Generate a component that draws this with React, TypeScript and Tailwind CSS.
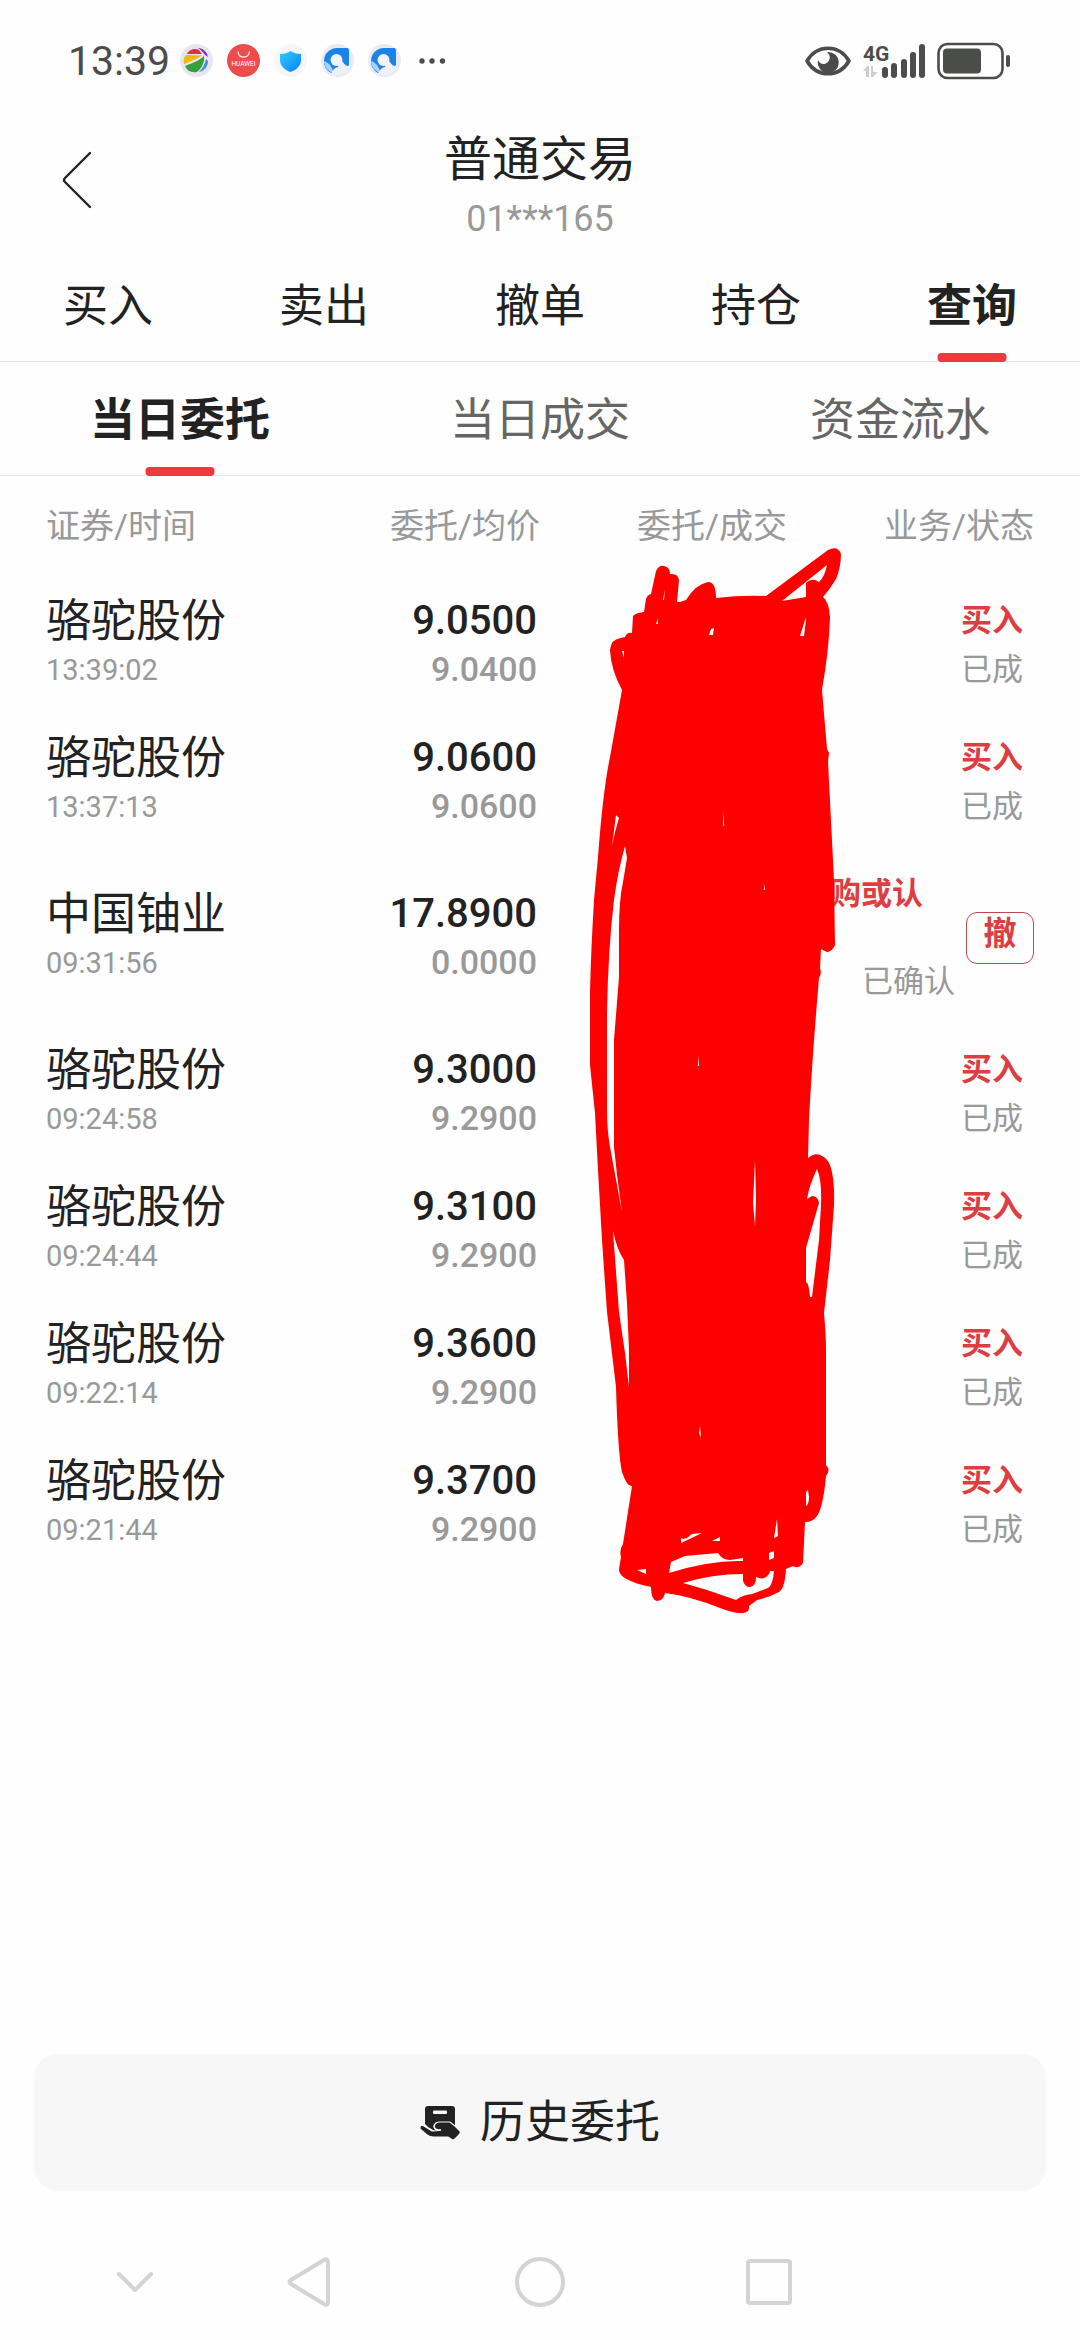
import clsx from 'clsx';

type Order = {
  name: string;
  time: string;
  price: string;
  avg: string;
  side: string;
  status: string;
  cancelable?: boolean;
};

const mainTabs = ['买入', '卖出', '撤单', '持仓', '查询'];
const subTabs = ['当日委托', '当日成交', '资金流水'];
const columns = ['证券/时间', '委托/均价', '委托/成交', '业务/状态'];

const orders: Order[] = [
  { name: '骆驼股份', time: '13:39:02', price: '9.0500', avg: '9.0400', side: '买入', status: '已成' },
  { name: '骆驼股份', time: '13:37:13', price: '9.0600', avg: '9.0600', side: '买入', status: '已成' },
  { name: '中国铀业', time: '09:31:56', price: '17.8900', avg: '0.0000', side: '购或认', status: '已确认', cancelable: true },
  { name: '骆驼股份', time: '09:24:58', price: '9.3000', avg: '9.2900', side: '买入', status: '已成' },
  { name: '骆驼股份', time: '09:24:44', price: '9.3100', avg: '9.2900', side: '买入', status: '已成' },
  { name: '骆驼股份', time: '09:22:14', price: '9.3600', avg: '9.2900', side: '买入', status: '已成' },
  { name: '骆驼股份', time: '09:21:44', price: '9.3700', avg: '9.2900', side: '买入', status: '已成' },
];

function GalleryIcon() {
  return (
    <svg viewBox="0 0 33 33" className="size-[33px]">
      <circle cx="16.5" cy="16.5" r="16.5" fill="#e8e6f2" />
      <path d="M7 10C9 5 16 4 19 6L22 10Z" fill="#d8333f" />
      <path d="M18 4C23 4 27 8 28 13L25 11C23 8 21 6 18 4Z" fill="#9424b8" />
      <path d="M4 20C3 16 4 13 6 11L22 11.500C17 15 10 18 4 20Z" fill="#f2b80c" />
      <path d="M5 22C13 19 20 16 24 12C25 19 21 25 17 28C11 29 7 27 5 22Z" fill="#35a13c" />
      <path d="M26 15L28 17C28 23 24 27 19 28C23 24 25 20 26 15Z" fill="#4190dc" />
    </svg>
  );
}

function HuaweiIcon() {
  return (
    <svg viewBox="0 0 33 33" className="size-[33px]">
      <circle cx="16.5" cy="16.5" r="16.5" fill="#ee4c4c" />
      <path d="M11 7.500C11.500 15 21.500 15 22.500 7.500" fill="none" stroke="#fff" strokeWidth="1.2" />
      <text x="16.500" y="22" textAnchor="middle" fontSize="6.500" fill="#fff" fontFamily="Roboto, sans-serif">
        HUAWEI
      </text>
    </svg>
  );
}

function ShieldIcon() {
  return (
    <svg viewBox="0 0 33 33" className="size-[33px]">
      <defs>
        <linearGradient id="shield" x1="0" y1="0" x2="1" y2="1">
          <stop offset="0" stopColor="#2fd0fb" />
          <stop offset="1" stopColor="#0a7ff8" />
        </linearGradient>
      </defs>
      <circle cx="16.5" cy="16.5" r="16.5" fill="#f5f6f7" />
      <path d="M16.500 7C19 9 23 10 27 10V16C27 22 22 26 16.500 28C11 26 6 22 6 16V10C10 10 14 9 16.500 7Z" fill="url(#shield)" />
    </svg>
  );
}

function BrowserIcon() {
  return (
    <svg viewBox="0 0 33 33" className="size-[33px]">
      <circle cx="16.5" cy="16.5" r="16.5" fill="#e6ebf5" />
      <path d="M3 17A13 13 0 0 1 16 4H26Q28 4 28 7V21L20 27L10 29Q3 25 3 17Z" fill="#1a83e8" />
      <path d="M3 17Q9 18 13 29Q4 27 3 17Z" fill="#a9d3f8" />
      <circle cx="15.500" cy="16" r="6" fill="#f1f3fa" />
      <path d="M10 30Q12 24 17 23Q17 17 22 18Q24 22 29 23Q26 30 18 31Q13 31 10 30Z" fill="#eef1f9" />
    </svg>
  );
}

function StatusBar() {
  return (
    <div className="flex h-[121px] items-center justify-between pl-[68px] pr-[69px] text-[#4b4d4a]">
      <div className="flex items-center gap-[14px]">
        <span className="w-[98px] text-[41px] leading-[48px]">13:39</span>
        <GalleryIcon />
        <HuaweiIcon />
        <ShieldIcon />
        <BrowserIcon />
        <BrowserIcon />
        <svg viewBox="0 0 30 8" className="ml-[2px] h-2 w-[30px]" fill="currentColor">
          <circle cx="5" cy="4" r="2.7" />
          <circle cx="15" cy="4" r="2.7" />
          <circle cx="25.500" cy="4" r="2.7" />
        </svg>
      </div>
      <div className="flex items-center gap-3">
        <svg viewBox="0 0 46 32" className="h-8 w-[46px]">
          <path d="M2 16C12 -1 34 -1 44 16C34 33 12 33 2 16Z" fill="none" stroke="currentColor" strokeWidth="3.600" strokeLinejoin="round" />
          <path d="M22 7A10.500 10.500 0 1 1 13 15C15 20 20 20 23 17C26 13 25 10 22 7Z" fill="currentColor" />
        </svg>
        <svg viewBox="0 0 62 36" className="h-9 w-[62px]" fill="currentColor">
          <text x="0" y="18" fontSize="21" fontWeight="700" fontFamily="Roboto, sans-serif">
            4G
          </text>
          <path d="M0 28L4 23H6V34H3V28ZM8 23H10V29H15L10 34H8Z" fill="#cfcccf" />
          <rect x="19" y="24" width="6" height="11" rx="3" />
          <rect x="28" y="20" width="6" height="15" rx="3" />
          <rect x="38" y="16" width="6" height="19" rx="3" />
          <rect x="47" y="9" width="6" height="26" rx="3" />
          <rect x="56" y="1" width="6" height="34" rx="3" />
        </svg>
        <svg viewBox="0 0 74 38" className="h-[38px] w-[74px]">
          <rect x="1.500" y="2" width="64" height="34" rx="9" fill="none" stroke="currentColor" strokeWidth="2.600" />
          <rect x="6" y="6.500" width="38" height="25" rx="4" fill="currentColor" />
          <rect x="69" y="13" width="4" height="12" rx="2" fill="currentColor" />
        </svg>
      </div>
    </div>
  );
}

function Tabs({ items, active, sub }: { items: string[]; active: number; sub?: boolean }) {
  return (
    <nav className="flex border-b border-[#e6e6e6]">
      {items.map((label, i) => (
        <button
          key={label}
          className={clsx(
            'relative h-[113px] flex-1 pt-1 text-[45px] leading-[64px]',
            i === active ? 'font-bold' : sub && 'text-[#666]',
          )}
        >
          {label}
          {i === active && (
            <span className="absolute -bottom-px left-1/2 h-[9px] w-[69px] -translate-x-1/2 rounded-[4px] bg-[#ec3a3d]" />
          )}
        </button>
      ))}
    </nav>
  );
}

function OrderRow({ order }: { order: Order }) {
  return (
    <tr className={order.cancelable ? 'h-[175px]' : 'h-[137px]'}>
      <td>
        <div className="text-[45px] leading-[51px]">{order.name}</div>
        <div className="text-[29px] leading-[47px] text-[#999]">{order.time}</div>
      </td>
      <td className="pr-[3px] text-right font-medium">
        <div className="text-[40px] leading-[49px]">{order.price}</div>
        <div className="text-[34px] leading-[49px] text-[#999]">{order.avg}</div>
      </td>
      <td />
      <td>
        {order.cancelable ? (
          <div className="flex items-center justify-end gap-[11px] text-[31px] leading-[49px]">
            <div className="flex flex-col gap-[39px] whitespace-nowrap text-right">
              <span className="pr-8 font-bold text-[#dc3e42]">{order.side}</span>
              <span className="text-[#999]">{order.status}</span>
            </div>
            <button className="h-[52px] w-[68px] rounded-[11px] border border-[#c0474c] pb-2 text-[33px] font-bold leading-[42px] text-[#dc3e42]">
              撤
            </button>
          </div>
        ) : (
          <div className="pr-[11px] text-right text-[31px] leading-[49px]">
            <div className="font-bold text-[#dc3e42]">{order.side}</div>
            <div className="text-[#999]">{order.status}</div>
          </div>
        )}
      </td>
    </tr>
  );
}

// Freehand marker strokes covering the quantity column
function Scribble() {
  return (
    <svg viewBox="590 546 254 1070" className="pointer-events-none absolute left-[590px] top-[70px] h-[1070px] w-[254px]">
      <path
        fill="#ff0000"
        fillRule="evenodd"
        d="M610 650Q611 639 621 638L625 637Q627 632 632 633L633 616Q635 613 644 612L646 599Q647 595 651 594L656 571Q659 565 664 566Q670 567 670 574Q678 573 679 580L677 602H680L686 600Q696 584 708 582Q716 582 716 598Q740 595 766 596L828 550Q838 545 841 554Q841 567 836 579Q830 589 823 597Q829 602 830 617Q829 650 822 690L827 749L829 753L828 762L834 880L835 945Q832 952 827 952L821 949L820 968Q822 974 819 978Q812 1060 809 1120L808 1158Q818 1149 828 1161Q835 1173 834 1205L830 1260L824 1313Q826 1335 826 1350V1465Q831 1470 826 1476Q823 1508 817 1516Q813 1522 805 1522L803 1563Q800 1568 795 1567L793 1566L786 1569Q785 1588 779 1592Q770 1597 757 1600L749 1606Q750 1612 743 1613Q735 1614 720 1608Q690 1596 665 1593Q664 1600 657 1601Q651 1600 651 1587Q618 1580 619 1569L621 1557Q619 1550 623 1544L632 1486Q627 1487 622 1472Q618 1455 616 1387L607 1312L602 1240L598 1170L595 1113L590 1065V992Q591 950 594 900L598 857Q603 790 610 757L622 690Q611 670 610 650Z
        M827 565L782 601L806 597V583Q812 577 819 582Q825 576 827 565Z
        M806 617L800 636H804L806 620Z
        M711 629L709 635H713L714 628Z
        M622 651L624 658V651Z
        M665 589L663 600L664 600Z
        M658 618L656 624H658Z
        M616 815L619 818L615 832L612 846Z
        M625 846L627 858L623 882Q619 900 619 930V977L614 1040V1147L617 1175L622 1212L610 1147Q607 1130 607 1110V1013Q608 950 614 900Q618 870 625 846Z
        M613 1231Q617 1250 624 1260L627 1303L629 1350V1387L625 1353L619 1312Z
        M723 810L724 826H723Z
        M765 884L764 890H765Z
        M698 1055V1066H699Z
        M755 1160L753 1203L755 1226L756 1200Z
        M817 1169Q822 1180 821 1205L819 1240L812 1297H810Q809 1283 806 1282V1248L819 1203Q818 1196 812 1196L807 1199Q809 1186 817 1169Z
        M808 1490L806 1492V1506Q809 1504 809 1497Z
        M700 1426L699 1433L701 1438Z
        M681 1538V1543L702 1533L692 1534L687 1538L683 1539Z
        M712 1541H720V1537Z
        M685 1556L718 1553Q722 1560 730 1560L743 1558V1561Q710 1560 669 1573L671 1562Z
        M637 1570L646 1569V1574Z
        M683 1583Q712 1574 743 1574V1581Q745 1587 750 1587Q756 1586 756 1577Q764 1581 769 1574L770 1571H774Q773 1585 768 1588L752 1594Q742 1595 736 1600L707 1590Z
        M769 1553L774 1551V1558L769 1560Z
        M777 1519L774 1538L778 1536Z"
      />
    </svg>
  );
}

function HandCardIcon() {
  return (
    <svg viewBox="0 0 40 36" className="h-9 w-10">
      <path d="M8 1H32Q35 1 35 4V21L20 29L8 22L5 19V4Q5 1 8 1Z" fill="#222" />
      <rect x="13" y="5.500" width="14" height="3.500" rx="1" fill="#f7f7f7" />
      <path
        d="M0 22Q1 19 4 21L12 26Q17 26 21 25Q14 25 14 21Q15 17 20 17H30L35 21L40 26Q41 28 39 30L35 34Q33 36 31 34L28 32H13Q9 32 7 30L0 24Z"
        fill="#222"
        stroke="#f7f7f7"
        strokeWidth="1.200"
      />
      <path d="M21 25H16Q13 22 15 19" fill="none" stroke="#f7f7f7" strokeWidth="1.200" />
    </svg>
  );
}

function NavBar() {
  return (
    <div className="mt-8 grid h-[117px] grid-cols-[270fr_78fr_384fr_74fr_274fr] place-items-center">
      <button aria-label="收起">
        <svg viewBox="0 0 40 24" className="h-6 w-10" fill="none" stroke="#d5d3d5" strokeWidth="4" strokeLinecap="round" strokeLinejoin="round">
          <path d="M4 4L20 20L36 4" />
        </svg>
      </button>
      <button aria-label="返回">
        <svg viewBox="0 0 46 52" className="h-[52px] w-[46px]" fill="none" stroke="#d5d3d5" strokeWidth="4" strokeLinejoin="round">
          <path d="M42 6Q42 2 38 4L5 24Q2 26 5 28L38 48Q42 50 42 46Z" />
        </svg>
      </button>
      <button aria-label="主页">
        <svg viewBox="0 0 50 50" className="size-[50px]" fill="none" stroke="#d5d3d5" strokeWidth="4">
          <circle cx="25" cy="25" r="23" />
        </svg>
      </button>
      <button aria-label="最近任务">
        <svg viewBox="0 0 46 46" className="size-[46px]" fill="none" stroke="#d5d3d5" strokeWidth="4">
          <rect x="2" y="2" width="42" height="42" rx="2" />
        </svg>
      </button>
    </div>
  );
}

export default function App() {
  return (
    <div className="flex min-h-screen flex-col bg-[#fefefe] font-[Roboto,'Noto_Sans_CJK_SC',sans-serif] text-[#222]">
      <StatusBar />

      <header className="grid grid-cols-[160px_1fr_160px]">
        <button aria-label="返回" className="flex h-[118px] items-center pl-[62px]">
          <svg viewBox="0 0 30 58" className="h-[58px] w-[30px]" fill="none" stroke="#222" strokeWidth="2.400" strokeLinecap="round">
            <path d="M28 2L3 27Q1 29 3 31L28 56" />
          </svg>
        </button>
        <div className="pt-[9px] text-center">
          <h1 className="text-[48px] leading-[60px]">普通交易</h1>
          <p className="text-[36px] leading-[58px] text-[#999]">01***165</p>
        </div>
      </header>

      <Tabs items={mainTabs} active={4} />
      <Tabs items={subTabs} active={0} sub />

      <main className="relative flex-1 px-[46px]">
        <table className="w-full table-fixed">
          <thead>
            <tr className="h-[100px] text-[34px] leading-[48px] text-[#999]">
              {columns.map((c, i) => (
                <th key={c} className={clsx('font-normal', i === 0 ? 'text-left' : 'text-right')}>
                  {c}
                </th>
              ))}
            </tr>
          </thead>
          <tbody>
            {orders.map((o) => (
              <OrderRow key={o.time} order={o} />
            ))}
          </tbody>
        </table>
        <Scribble />
      </main>

      <footer>
        <div className="px-[34px]">
          <button className="flex h-[137px] w-full items-center justify-center gap-5 rounded-3xl bg-[#f7f7f7] text-[45px] leading-[64px]">
            <HandCardIcon />
            历史委托
          </button>
        </div>
        <NavBar />
      </footer>
    </div>
  );
}
